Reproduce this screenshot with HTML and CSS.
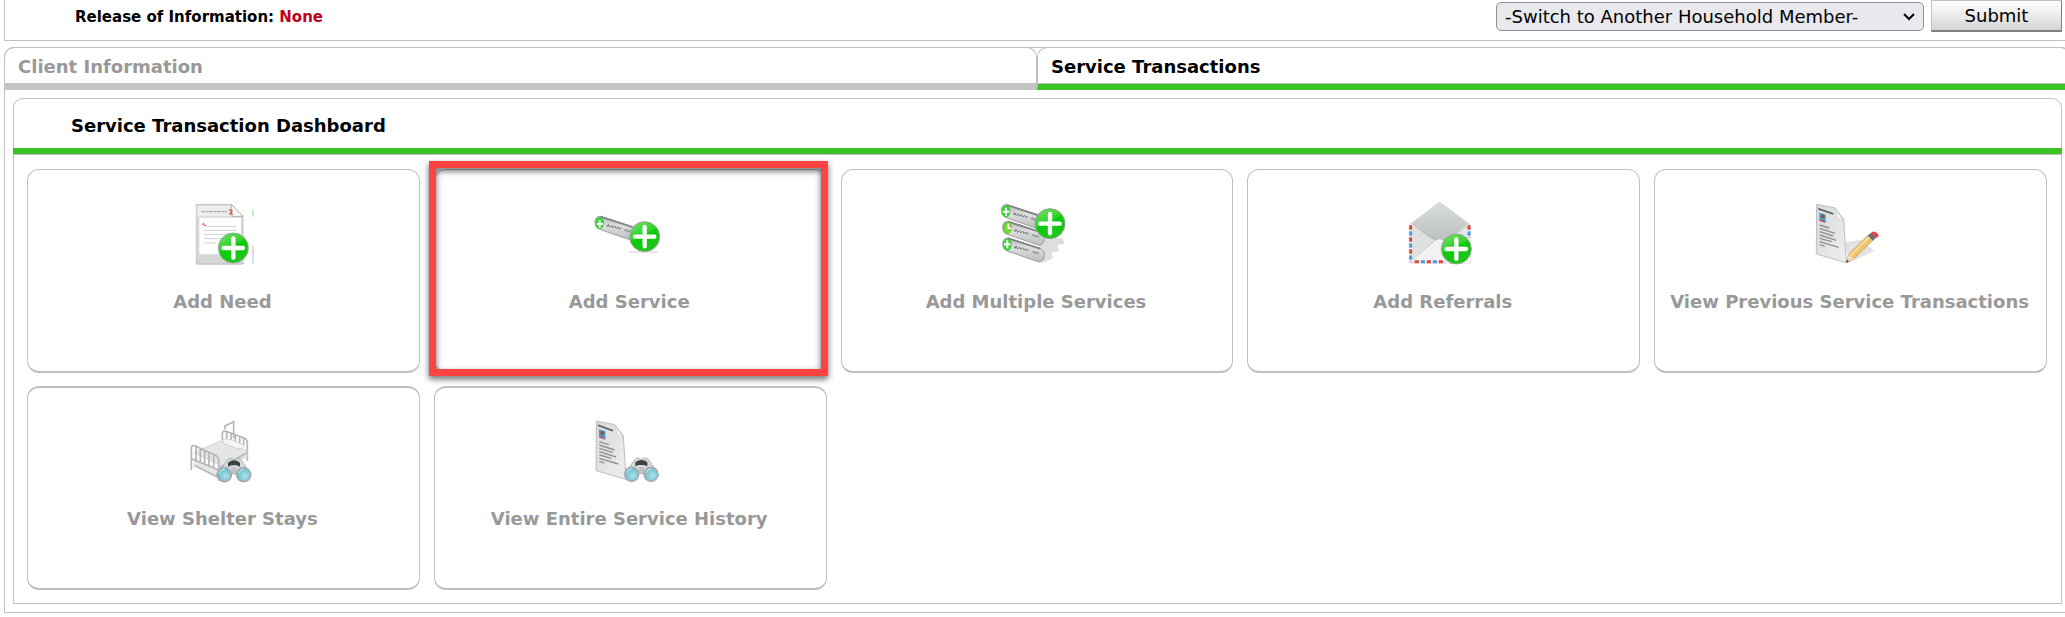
FILE: index.html
```html
<!DOCTYPE html>
<html lang="en">

<head>
  <meta charset="UTF-8" />
  <meta name="viewport" content="width=device-width, initial-scale=1.0" />
  <title>Service Transactions</title>
  <link rel="stylesheet" href="styles.css">
</head>

<body>
  <!-- shared icon parts -->
  <svg class="defs" aria-hidden="true">
    <defs>
      <linearGradient id="green" x1="0" y1="0" x2="0.5" y2="1">
        <stop offset="0" stop-color="#7be070" />
        <stop offset="0.5" stop-color="#2fd32a" />
        <stop offset="0.55" stop-color="#08cc08" />
        <stop offset="1" stop-color="#1fc41c" />
      </linearGradient>
      <linearGradient id="metal" x1="0" y1="0" x2="0" y2="1">
        <stop offset="0" stop-color="#b4b6b8" />
        <stop offset="0.4" stop-color="#dcdedf" />
        <stop offset="1" stop-color="#b9bbbd" />
      </linearGradient>
      <linearGradient id="paper" x1="0" y1="0" x2="1" y2="1">
        <stop offset="0" stop-color="#d6d9da" />
        <stop offset="1" stop-color="#efefef" />
      </linearGradient>
      <linearGradient id="flap" x1="0" y1="0" x2="0" y2="1">
        <stop offset="0" stop-color="#d9dcdc" />
        <stop offset="1" stop-color="#b8bebe" />
      </linearGradient>
      <radialGradient id="lens" cx="0.6" cy="0.6" r="0.7">
        <stop offset="0" stop-color="#a9e2ea" />
        <stop offset="1" stop-color="#5fb2c2" />
      </radialGradient>
      <g id="plus">
        <circle r="45" fill="url(#green)" stroke="#8fa88f" stroke-width="3" />
        <path d="M-29 0H29M0-29V29" stroke="#fff" stroke-width="13" stroke-linecap="round" />
      </g>
      <g id="pill">
        <path d="M14-19L108 12Q122 18 121 34T105 53L10 20Q-5 14-4-3T14-19Z" fill="url(#metal)" stroke="#9c9ea0" stroke-width="3" />
        <path d="M12-18L108 13" stroke="#808284" stroke-width="5" fill="none" />
        <path d="M30 8l4 4 2-7 5 9 6-6 3 8 6-6 4 8 6-5 4 7 5-5M84 25l5-5 4 8 6-5 5 8" stroke="#75787b" stroke-width="3" fill="none" />
        <ellipse cx="10" cy="1" rx="13" ry="18" fill="#39cf35" />
      </g>
      <g id="document">
        <path d="M53 40L108 51L134 84L142 215L52 189Z" fill="url(#paper)" stroke="#bcbfc0" stroke-width="3" />
        <path d="M108 51L116 82L134 91Z" fill="#fbfbfb" stroke="#c0c2c3" stroke-width="2" />
        <path d="M58 53L103 69" stroke="#55585a" stroke-width="5" />
        <path d="M61 65L80 71V96L61 90Z" fill="#3f9fd6" />
        <circle cx="71" cy="76" r="6" fill="#9a5136" />
        <path d="M63 90Q70 78 79 95Z" fill="#d9503f" />
        <path d="M62 102L90 111M62 112L108 127M62 122L103 135M62 132L112 148M62 142L98 152M62 152L119 169M62 161L77 166" stroke="#8f9294" stroke-width="4" />
      </g>
      <g id="binoculars">
        <path d="M-52 34L-20-12Q-10-22 0-12Q10-22 22-12L52 34L30 54L8 30H-8L-28 54Z" fill="#d6d9da" stroke="#aeb1b3" stroke-width="3" />
        <path d="M-18-4Q0-18 18-4V8L8 4H-8L-18 8Z" fill="#3d4246" />
        <path d="M-8 10H8V30H-8Z" fill="#bfc2c4" />
        <circle cx="-29" cy="32" r="21" fill="url(#lens)" stroke="#a6adb0" stroke-width="5" />
        <circle cx="29" cy="32" r="21" fill="url(#lens)" stroke="#a6adb0" stroke-width="5" />
        <path d="M-44 28Q-40 16-28 15M14 28Q18 16 30 15" stroke="#d4f1f5" stroke-width="3" fill="none" />
      </g>
    </defs>
  </svg>

  <div class="client-bar">
    <p class="release">Release of Information: <span class="none">None</span></p>
    <form class="switch">
      <select class="member" aria-label="Switch to Another Household Member">
        <option>-Switch to Another Household Member-</option>
      </select>
      <button type="button" class="submit">Submit</button>
    </form>
  </div>

  <div class="container">
    <nav class="tabs">
      <a href="#client" class="tab">Client Information</a>
      <a href="#service" class="tab active">Service Transactions</a>
    </nav>

    <main class="panel">
      <h1 class="panel-title">Service Transaction Dashboard</h1>
      <div class="cards">
        <a href="#add-need" class="card">
          <svg class="icon" viewBox="34 33 192 192" aria-hidden="true">
            <path d="M50 216H200L190 222H56Z" fill="#d6d6d6" />
            <path d="M53 40H158L193 76V218H53Z" fill="#d6d7d7" stroke="#c6c7c7" stroke-width="3" />
            <path d="M62 80H187V190H62Z" fill="#fff" />
            <path d="M56 44H156L160 76H56Z" fill="#ededed" />
            <path d="M68 62H145" stroke="#a9a9a9" stroke-width="4" stroke-dasharray="12 3 7 2" />
            <path d="M158 40L160 76H193Z" fill="#fafafa" stroke="#b4b4b4" stroke-width="3" />
            <path d="M151 56l9 4-6 8 8 2" stroke="#e04a42" stroke-width="4" fill="none" />
            <path d="M70 101l5-4 2 6 6 1" stroke="#e8504a" stroke-width="3" fill="none" />
            <path d="M84 106H174M76 118H174M76 130H150M76 143H130M76 156H112" stroke="#d0d0d0" stroke-width="3" />
            <use href="#plus" x="164" y="171" />
            <path d="M223 55V77" stroke="#62cf5c" stroke-width="2" />
            <path d="M223 163V190" stroke="#e77669" stroke-width="2" />
            <path d="M223 190V220" stroke="#8fb4e4" stroke-width="2" />
          </svg>
          <span>Add Need</span>
        </a>
        <a href="#add-service" class="card highlighted">
          <svg class="icon" viewBox="40 33 192 192" aria-hidden="true">
            <use href="#pill" x="38" y="95" />
            <path d="M39 99H58M48 87V110" stroke="#fff" stroke-width="6" />
            <path d="M136 183H224" stroke="#d0d0d0" stroke-width="3" />
            <use href="#plus" x="183" y="137" />
          </svg>
          <span>Add Service</span>
        </a>
        <a href="#add-multiple" class="card">
          <svg class="icon" viewBox="46 33 192 192" aria-hidden="true">
            <path d="M150 140L222 142L228 158L206 162L212 180L190 184L192 202L160 216Z" fill="#dedede" />
            <use href="#pill" x="46" y="160" />
            <use href="#pill" x="46" y="110" />
            <use href="#pill" x="42" y="60" />
            <path d="M42 62H62M52 50V74M46 160H66M56 148V172" stroke="#fff" stroke-width="6" />
            <ellipse cx="58" cy="110" rx="12" ry="17" fill="#7bd42f" />
            <path d="M59 98V112H68" stroke="#fff" stroke-width="5" fill="none" />
            <use href="#plus" x="184" y="98" />
          </svg>
          <span>Add Multiple Services</span>
        </a>
        <a href="#add-referrals" class="card">
          <svg class="icon" viewBox="37 33 192 192" aria-hidden="true">
            <path d="M32 102L123 34L215 102V216H32Z" fill="#ebebeb" stroke="#c9cbcb" stroke-width="3" />
            <path d="M38 100L123 35L209 100L145 148Q123 166 103 150Z" fill="url(#flap)" />
            <path d="M40 106L119 156L40 208Z" fill="#dfe0e0" />
            <path d="M209 106L135 156L209 208Z" fill="#e6e7e7" />
            <path d="M40 208L108 150Q122 140 136 150L207 208Z" fill="#f2f2f2" />
            <path d="M40 208L108 150M207 106L145 148" stroke="#c6c8c8" stroke-width="2" />
            <path d="M36 103V215M211 103V215M48 212H210" stroke="#fff" stroke-width="9" />
            <path d="M36 103V212M211 103V140M48 212H140" stroke="#d9483a" stroke-width="9" stroke-dasharray="13 23" />
            <path d="M36 121V212M211 121V140M66 212H140" stroke="#4b9be0" stroke-width="9" stroke-dasharray="13 23" />
            <use href="#plus" x="173" y="174" />
          </svg>
          <span>Add Referrals</span>
        </a>
        <a href="#previous" class="card">
          <svg class="icon" viewBox="57 33 192 192" aria-hidden="true">
            <path d="M138 154L186 146L226 180L150 216Z" fill="#e2e2e2" />
            <use href="#document" />
            <path d="M141 216L149 190L208 132L223 147L165 203Z" fill="#efc26b" stroke="#c79548" stroke-width="2" />
            <path d="M155 192L213 137" stroke="#fbe3a8" stroke-width="5" />
            <path d="M141 216L149 190L165 203Z" fill="#efdcc0" />
            <path d="M141 216L144 206L150 211Z" fill="#333" />
            <path d="M206 134L216 125L231 140L222 149Z" fill="#6d7276" />
            <path d="M215 126Q225 116 235 127T230 141Z" fill="#e5434d" />
          </svg>
          <span>View Previous Service Transactions</span>
        </a>
        <a href="#shelter" class="card">
          <svg class="icon" viewBox="34 21 192 192" aria-hidden="true">
            <g fill="none" stroke="#b3b5b6" stroke-width="5">
              <path d="M139 52V42L165 29V78" />
              <path d="M131 84V62Q133 56 142 58L196 78Q206 82 206 92V146M144 59V84M157 64V86M170 69V90M183 74V96M195 80V100" />
            </g>
            <path d="M126 86L206 116V134L130 162L46 122Z" fill="#e4e5e5" stroke="#c3c5c6" stroke-width="2" />
            <path d="M133 82Q150 76 198 100Q196 112 176 110L134 94Z" fill="#f6f6f6" stroke="#c3c5c6" stroke-width="2" />
            <path d="M206 122L122 168" stroke="#bcbebf" stroke-width="6" />
            <path d="M40 138L120 170V194L52 164Z" fill="#e6e6e6" />
            <path d="M38 174V108Q40 98 50 102L110 130Q120 134 120 146V206M52 104V144M65 108V150M78 114V156M91 120V162M105 128V168M38 140L120 174M46 160L118 196" stroke="#b3b5b6" stroke-width="5" fill="none" />
            <use href="#binoculars" x="166" y="156" />
          </svg>
          <span>View Shelter Stays</span>
        </a>
        <a href="#history" class="card">
          <svg class="icon" viewBox="40 21 192 192" aria-hidden="true">
            <use href="#document" x="-15" y="-13" />
            <use href="#binoculars" x="173" y="155" />
          </svg>
          <span>View Entire Service History</span>
        </a>
      </div>
    </main>
  </div>
</body>

</html>
```
FILE: styles.css
```css
* {
  padding: 0;
  margin: 0;
  box-sizing: border-box;
}

body {
  background-color: #fff;
  font-family: Verdana, "DejaVu Sans", sans-serif;
  font-size: 18px;
  overflow-x: hidden;
}

a {
  text-decoration: none;
}

.defs {
  position: absolute;
  width: 0;
  height: 0;
}

.client-bar {
  display: flex;
  justify-content: space-between;
  height: 41px;
  margin-left: 4px;
  padding: 0 3px 0 70px;
  border-left: 1px solid #c0c0c0;
  border-bottom: 1px solid #c0c0c0;
}

.release {
  font-size: 15px;
  font-weight: bold;
  line-height: 34px;
}

.none {
  color: #c00020;
}

.switch {
  display: flex;
  align-items: flex-start;
  gap: 7px;
}

.member {
  width: 428px;
  height: 29px;
  margin-top: 2px;
  padding: 0 8px;
  border: 1px solid #8f8f9d;
  border-radius: 5px;
  appearance: none;
  background: #e9e9ed url('data:image/svg+xml,<svg xmlns="http://www.w3.org/2000/svg" width="12" height="8"><path d="M1 1l5 5 5-5" fill="none" stroke="black" stroke-width="2"/></svg>') no-repeat right 8px center;
  color: #000;
  font-family: inherit;
  font-size: 18px;
}

.submit {
  width: 131px;
  height: 32px;
  border: 1px solid #c0c0c0;
  border-right-color: #808080;
  border-bottom: 2px solid #808080;
  background: linear-gradient(#fff, #d6d6d6);
  color: #000;
  font-family: inherit;
  font-size: 18px;
}

/* runs a little past the right edge of the window */
.container {
  margin: 6px -6px 0 4px;
  padding-bottom: 8px;
  border: 1px solid #c0c0c0;
  border-radius: 10px 10px 0 0;
}

.tabs {
  display: flex;
  margin: -1px 0 0 -1px;
}

.tab {
  flex: 1;
  height: 43px;
  padding-left: 13px;
  border: 1px solid #c0c0c0;
  border-bottom: 7px solid #c4c4c4;
  border-radius: 10px 10px 0 0;
  color: #999;
  font-weight: bold;
  line-height: 38px;
}

.tab.active {
  border-bottom: 6px solid #3bc225;
  box-shadow: inset 0 -1px #c0c0c0;
  color: #000;
}

.panel {
  margin: 8px 8px 0;
  border: 1px solid #c0c0c0;
  border-radius: 10px 10px 0 0;
}

.panel-title {
  height: 55px;
  margin: 0 -1px;
  padding-left: 58px;
  border-bottom: 6px solid #3bc225;
  box-shadow: 0 1px #c0c0c0;
  font-size: 18px;
  line-height: 54px;
}

.cards {
  display: grid;
  grid-template-columns: repeat(5, 1fr);
  gap: 13px 14px;
  padding: 15px 14px 13px 13px;
}

.card {
  position: relative;
  display: flex;
  flex-direction: column;
  align-items: center;
  gap: 24px;
  height: 204px;
  padding: 32px 2px 0 0;
  border: 1px solid #c0c0c0;
  border-bottom-width: 2px;
  border-radius: 12px;
  color: #999;
  font-weight: bold;
  line-height: 24px;
  white-space: nowrap;
}

.card:nth-child(n + 6) {
  padding-top: 31px;
  border-top-width: 2px;
}

/* red frame over the card */
.highlighted::after {
  content: "";
  position: absolute;
  inset: -9px -2px -5px -6px;
  border: 7px solid #ff4343;
  filter: drop-shadow(0 3px 3px rgba(0, 0, 0, 0.6));
}

.icon {
  width: 64px;
  height: 64px;
  overflow: visible;
}
```
